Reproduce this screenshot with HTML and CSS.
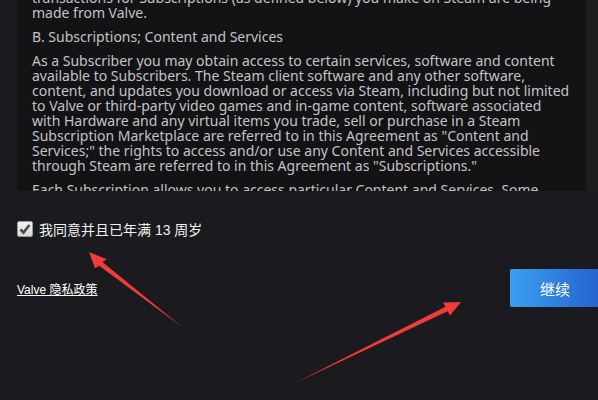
FILE: index.html
```html
<!DOCTYPE html>
<html lang="zh-CN">
<head>
  <meta charset="UTF-8" />
  <title>Steam 订户协议</title>
  <link rel="stylesheet" href="styles.css">
</head>
<body>

  <div class="page">
    <div class="terms-wrap">
      <div class="terms">
        <p class="first">transactions for Subscriptions (as defined below) you make on Steam are being made from Valve.</p>
        <p>B. Subscriptions; Content and Services</p>
        <p>As a Subscriber you may obtain access to certain services, software and content available to Subscribers. The Steam client software and any other software, content, and updates you download or access via Steam, including but not limited to Valve or third-party video games and in-game content, software associated with Hardware and any virtual items you trade, sell or purchase in a Steam Subscription Marketplace are referred to in this Agreement as "Content and Services;" the rights to access and/or use any Content and Services accessible through Steam are referred to in this Agreement as "Subscriptions."</p>
        <p>Each Subscription allows you to access particular Content and Services. Some Subscriptions may impose additional terms specific to that Subscription.</p>
      </div>
      <div class="scrollbar"></div>
    </div>

    <label class="agree">
      <span class="checkbox">
        <svg width="14" height="14" viewBox="0 0 14 14">
          <path d="M2.5 7.5 L5.5 10.5 L11.5 3" fill="none" stroke="#4a4a4a" stroke-width="2.6"/>
        </svg>
      </span>
      我同意并且已年满 13 周岁
    </label>

    <div class="footer">
      <a href="#" class="privacy">Valve 隐私政策</a>
      <button class="continue">继续</button>
    </div>
  </div>

  <!-- annotation arrows drawn over the screenshot -->
  <svg class="marks" width="598" height="400" viewBox="0 0 598 400">
    <polygon points="182,327 99.2,265.7 95,268.3 89,252 106.7,259.3 102.4,261.9" fill="#f23b3b"/>
    <polygon points="295,383 445.4,306.8 443,302.5 461,302 450,315.5 447.6,311.2" fill="#f23b3b"/>
  </svg>

</body>
</html>
```

FILE: styles.css
```css
body {
  margin: 0;
  background-color: #1b1b1f;
  font-family: "Noto Sans", Arial, "Noto Sans CJK SC", sans-serif;
  overflow: hidden;
}
.page {
  padding-left: 17px;
}
.terms-wrap {
  display: flex;
  height: 191px;
}
.terms {
  flex: 1;
  background-color: #131316;
  color: #c2c3c6;
  font-size: 14px;
  line-height: 15px;
  padding: 0 14px 0 15px;
  overflow: hidden;
}
.terms p {
  margin: 0 0 9px;
}
.terms p.first {
  margin-top: -10px;
}
.scrollbar {
  width: 12px;
  background-color: #1e1e21;
}
.agree {
  display: flex;
  align-items: center;
  gap: 6px;
  margin-top: 28px;
  color: #f0f0f0;
  font-size: 14px;
  font-family: Arial, "Noto Sans CJK SC", sans-serif;
}
.checkbox {
  width: 14px;
  height: 14px;
  border: 1px solid #9a9a9a;
  border-radius: 2px;
  background: linear-gradient(#f2f2f2, #d8d8d8);
  display: flex;
}
.footer {
  display: flex;
  justify-content: space-between;
  align-items: center;
  margin-top: 30px;
  margin-right: -2px;
}
.privacy {
  color: #fff;
  font-size: 12px;
  font-family: "Liberation Sans", Arial, "Noto Sans CJK SC", sans-serif;
}
.continue {
  width: 90px;
  height: 38px;
  border: none;
  border-radius: 2px;
  background: linear-gradient(to right, #3a9ff0, #2462cf);
  color: #fff;
  font-size: 15px;
  font-family: "Noto Sans CJK SC", sans-serif;
}
.marks {
  position: absolute;
  left: 0;
  top: 0;
  pointer-events: none;
}
```
